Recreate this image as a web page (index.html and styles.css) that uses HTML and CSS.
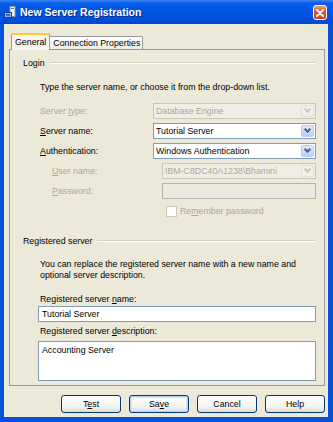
FILE: index.html
```html
<!DOCTYPE html>
<html lang="en">
<head>
  <meta charset="UTF-8" />
  <title>New Server Registration</title>
  <link rel="stylesheet" href="styles.css">
</head>
<body>
  <div class="window">
    <div class="titlebar">
      <svg class="app-icon" width="13" height="13" viewBox="0 0 13 13">
        <rect x="6" y="0.5" width="5" height="10" fill="#f4f4f4" stroke="#8a96a8"/>
        <rect x="7" y="2" width="3" height="1" fill="#6a7a96"/>
        <rect x="0.5" y="6.5" width="7" height="5" fill="#dfe6f2" stroke="#1c3f8a"/>
        <rect x="1.5" y="7.5" width="5" height="3" fill="#3a6fd8"/>
      </svg>
      <span class="title">New Server Registration</span>
      <span class="close">
        <svg width="8" height="8" viewBox="0 0 8 8">
          <path d="M1 1L7 7M7 1L1 7" stroke="#fff" stroke-width="1.8" stroke-linecap="round"/>
        </svg>
      </span>
    </div>

    <div class="client">
      <div class="tabs">
        <div class="tab active">General</div>
        <div class="tab">Connection Properties</div>
      </div>

      <div class="panel">
        <div class="legend"><span>Login</span></div>
        <div class="section">
          <p class="hint">Type the server name, or choose it from the drop-down list.</p>
          <div class="form">
            <label class="disabled">Server <u>t</u>ype:</label>
            <div class="combo disabled"><span>Database Engine</span><i class="arrow"></i></div>

            <label><u>S</u>erver name:</label>
            <div class="combo"><span>Tutorial Server</span><i class="arrow"></i></div>

            <label><u>A</u>uthentication:</label>
            <div class="combo"><span>Windows Authentication</span><i class="arrow"></i></div>

            <label class="disabled sub"><u>U</u>ser name:</label>
            <div class="combo disabled sub"><span>IBM-C8DC40A1238\Bhamini</span><i class="arrow"></i></div>

            <label class="disabled sub"><u>P</u>assword:</label>
            <div class="textbox disabled sub"></div>

            <div class="check disabled"><i class="box"></i>Re<u>m</u>ember password</div>
          </div>
        </div>

        <div class="legend second"><span>Registered server</span></div>
        <div class="section">
          <p class="note">You can replace the registered server name with a new name and optional server description.</p>
          <label class="field-label">Registered server <u>n</u>ame:</label>
          <div class="textbox wide">Tutorial Server</div>
          <label class="field-label desc">Registered server <u>d</u>escription:</label>
          <div class="textbox wide area">Accounting Server</div>
        </div>
      </div>

      <div class="buttons">
        <button>T<u>e</u>st</button>
        <button class="default">Sa<u>v</u>e</button>
        <button>Cancel</button>
        <button>Help</button>
      </div>
    </div>
  </div>
</body>
</html>
```

FILE: styles.css
```css
body {
  margin: 0;
  font-family: "Liberation Sans", Arial, sans-serif;
  font-size: 8.8px;
  color: #000;
}

.window {
  width: 333px;
  height: 422px;
  background: #0650dc;
  display: flex;
  flex-direction: column;
}

.titlebar {
  height: 24px;
  display: flex;
  align-items: center;
  background: linear-gradient(to bottom, #3d86f5 0, #0a60ec 3px, #0056e6 9px, #0052e0 18px, #0047cc 24px);
}

.app-icon {
  margin-left: 4px;
  margin-top: 1px;
}

.title {
  margin-left: 3px;
  color: #fff;
  font-weight: bold;
  font-size: 10.5px;
  text-shadow: 1px 1px 0 #0a2a80;
  flex: 1;
}

.close {
  width: 14px;
  height: 15px;
  margin-right: 6px;
  margin-top: 1px;
  box-sizing: border-box;
  border: 1px solid #fff;
  border-radius: 3px;
  background: linear-gradient(to bottom, #f09a7c, #e05a33 40%, #c8401d);
  display: flex;
  align-items: center;
  justify-content: center;
}

.client {
  flex: 1;
  margin: 0 5px 5px 4px;
  background: #ece9d8;
}

.tabs {
  display: flex;
  align-items: flex-end;
  padding: 9px 0 0 7px;
  margin-bottom: -1px;
  position: relative;
  z-index: 1;
}

.tab {
  height: 13px;
  line-height: 12px;
  padding: 0 2px 0 3px;
  margin-bottom: 1px;
  box-sizing: border-box;
  border: 1px solid #919b9c;
  border-bottom: none;
  border-radius: 2px 2px 0 0;
  background: linear-gradient(to bottom, #ffffff, #ecebe6);
  margin-left: -1px;
}

.tab.active {
  height: 17px;
  line-height: 14px;
  padding: 0 3px;
  margin-bottom: 0;
  margin-left: 0;
  border-top: 2px solid #ffc83c;
  background: #f5f4ee;
  position: relative;
  z-index: 2;
}

.panel {
  margin-left: 5px;
  width: 316px;
  height: 337px;
  box-sizing: border-box;
  border: 1px solid #919b9c;
  background: #ece9d8;
  padding: 7px 8px 0 13px;
}

.legend {
  display: flex;
  align-items: center;
  height: 12px;
}

.legend::after {
  content: "";
  flex: 1;
  margin-left: 5px;
  border-top: 1px solid #d0d0bf;
  border-bottom: 1px solid #fff;
}

.legend.second {
  margin-top: 16px;
}

.section {
  padding-left: 17px;
}

.hint {
  margin: 12px 0 0;
  line-height: 12px;
}

.form {
  margin-top: 10px;
  display: grid;
  grid-template-columns: 113px 163px;
  grid-auto-rows: 16px;
  row-gap: 4px;
  align-items: center;
}

.form label {
  line-height: 12px;
}

.disabled {
  color: #aca899;
}

label.sub {
  padding-left: 12px;
}

.combo {
  height: 16px;
  box-sizing: border-box;
  border: 1px solid #7f9db9;
  background: #fff;
  display: flex;
  align-items: center;
  padding-left: 2px;
}

.combo span {
  flex: 1;
}

.combo.sub,
.textbox.sub {
  margin-left: 9px;
}

.combo.disabled {
  border-color: #c9c7ba;
  background: #f0eee4;
}

.arrow {
  width: 13px;
  height: 12px;
  margin-right: 1px;
  border-radius: 2px;
  border: 1px solid #b9cdf5;
  box-sizing: border-box;
  background: linear-gradient(to bottom, #dfe8fc, #bccdf5);
  position: relative;
}

.arrow::after {
  content: "";
  position: absolute;
  left: 3px;
  top: 1px;
  width: 3px;
  height: 3px;
  border-right: 2px solid #4d6185;
  border-bottom: 2px solid #4d6185;
  transform: rotate(45deg);
}

.combo.disabled .arrow {
  border-color: #e2e0d6;
  background: #f2f0e8;
}

.combo.disabled .arrow::after {
  border-color: #c9c7ba;
}

.textbox {
  height: 16px;
  box-sizing: border-box;
  border: 1px solid #7f9db9;
  background: #fff;
  padding-left: 2px;
  line-height: 14px;
}

.textbox.disabled {
  border-color: #b5b2a5;
  background: #ebe9df;
}

.check {
  grid-column: 2;
  margin-left: 13px;
  display: flex;
  align-items: center;
  height: 13px;
}

.check .box {
  width: 11px;
  height: 11px;
  box-sizing: border-box;
  border: 1px solid #cac8bb;
  background: #fff;
  margin-right: 3px;
}

.note {
  margin: 12px 0 0;
  line-height: 11px;
  width: 270px;
}

.field-label {
  display: block;
  margin-top: 12px;
  line-height: 12px;
}

.field-label.desc {
  margin-top: 3px;
}

.wide {
  margin-left: -2px;
  width: 278px;
  margin-top: 1px;
  padding-left: 3px;
}

.wide.area {
  height: 40px;
  margin-top: 4px;
  line-height: 16px;
}

.buttons {
  display: flex;
  justify-content: flex-end;
  gap: 8px;
  margin-top: 9px;
  padding-right: 3px;
}

.buttons button {
  width: 60px;
  height: 18px;
  padding: 0;
  font-family: inherit;
  font-size: 8.8px;
  color: #000;
  border: 1px solid #003c74;
  border-radius: 3px;
  background: linear-gradient(to bottom, #ffffff, #f3f3ef 70%, #dcd8cc);
}

.buttons button.default {
  box-shadow: inset 0 0 0 1px #b8d0f4, inset 0 0 0 2px #d6e4fa;
}
```
